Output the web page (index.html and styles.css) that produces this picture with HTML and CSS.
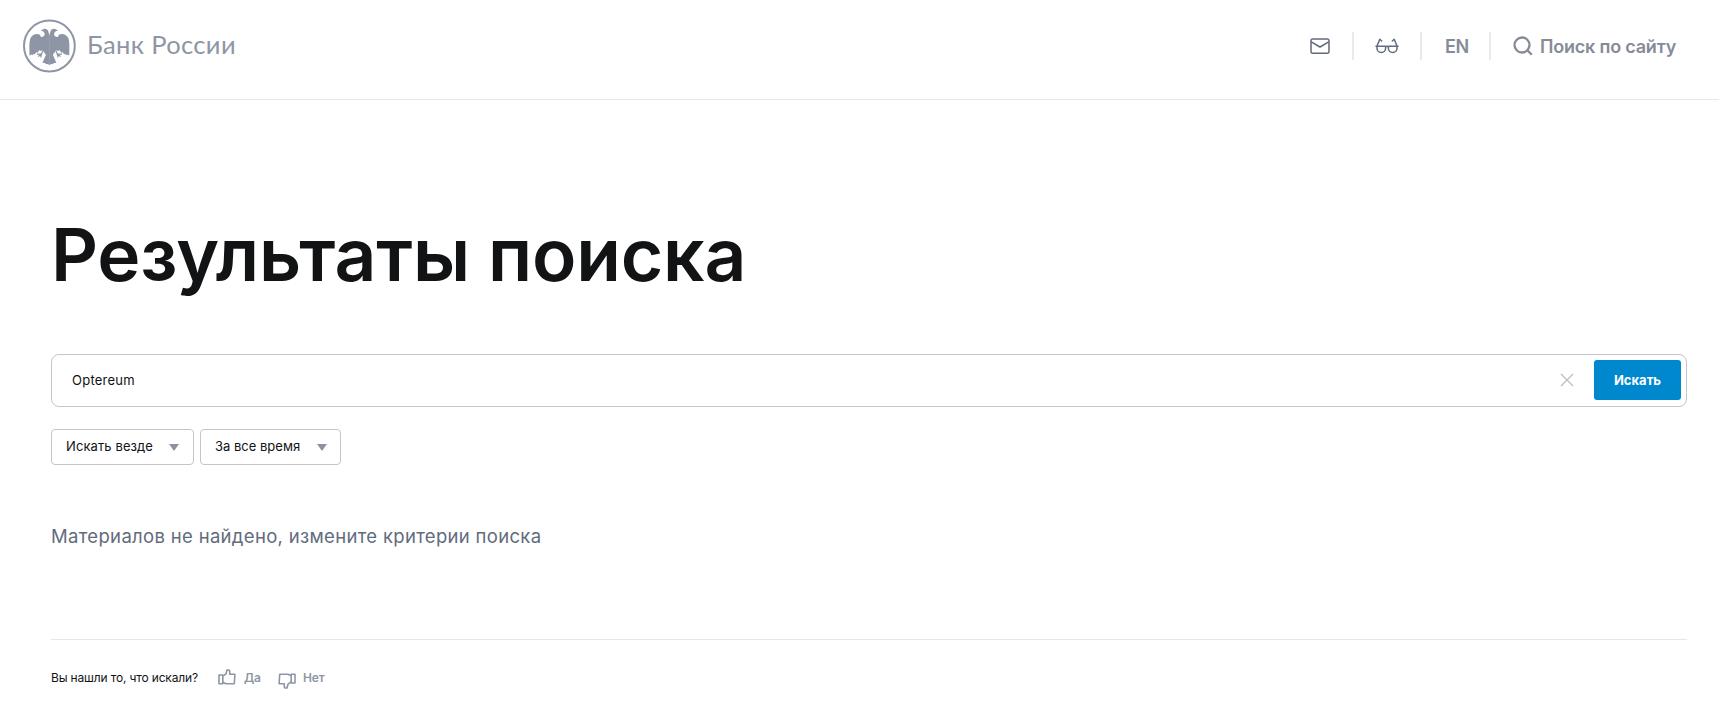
FILE: index.html
```html
<!DOCTYPE html>
<html lang="ru">
<head>
  <meta charset="UTF-8" />
  <title>Результаты поиска | Банк России</title>
  <meta name="viewport" content="width=device-width, initial-scale=1" />
  <link rel="stylesheet" href="styles.css">
</head>
<body>

  <header class="header">
    <a class="logo" href="#">
      <svg class="logo-emblem" viewBox="0 0 54 54" width="54" height="54">
        <circle cx="27.4" cy="27" r="25.400" fill="none" stroke="#8e96a5" stroke-width="2" />
        <g id="wing">
          <path fill="#8e96a5" d="M27.600 16.500C26.400 14 26.700 10.500 23.900 10Q21.900 9.300 20.700 10.500L18.700 11.500L20.900 12.300C23 13.500 23.400 16.600 21.200 17.600C19.200 18.500 17.900 17.600 18.300 16C15.400 14 10.500 15 8.500 19C6.800 23.500 7.600 30 7.500 36.800L9.400 35.600L10.100 36.200L11.600 34.900L12.700 35.300L14.200 33.300L15.600 33.700L17.100 31.200L19.100 32L20.700 31C21.400 33 23.400 34.500 23.900 36L20.400 43.700L22.700 44L24.400 45.300L25.900 45L27.600 46.300Z" />
          <path fill="none" stroke="#8e96a5" stroke-width="1.200" d="M20.900 31.500L19.600 35L14.900 35.200M19.600 35L16.200 37.500M19.600 35L18.700 38.300" />
        </g>
        <use href="#wing" transform="matrix(-1 0 0 1 54.800 0)" />
      </svg>
      <span class="logo-text">Банк России</span>
    </a>

    <nav class="tools">
      <a class="tool tool-mail" href="#">
        <svg viewBox="0 0 20 16" width="20" height="16" fill="none" stroke="#626b7c" stroke-width="1.500" stroke-linejoin="round">
          <rect x="1" y="0.900" width="18" height="14.400" rx="1.800" />
          <path d="M1.300 3.800L10 9L18.700 3.800" />
        </svg>
      </a>
      <a class="tool tool-glasses" href="#">
        <svg viewBox="0 0 24 16" width="24" height="16" fill="none" stroke="#626b7c" stroke-width="1.500" stroke-linecap="round" stroke-linejoin="round">
          <path d="M1 8.300H10.600V10.200A4.200 4.200 0 0 1 2 10.200V8.300M23 8.300H13.400V10.200A4.200 4.200 0 0 0 22 10.200V8.300M10.600 9C11.300 7.900 12.700 7.900 13.400 9M2 8L4.800 1.200L6.700 3M22 8L19.200 1.200L17.300 3" />
        </svg>
      </a>
      <a class="tool tool-lang" href="#">EN</a>
      <a class="tool tool-search" href="#">
        <svg viewBox="0 0 20 20" width="20" height="20" fill="none" stroke="#858b98" stroke-width="2.300">
          <circle cx="9" cy="9" r="7.500" />
          <path d="M14.300 14.300L18.800 18.800" />
        </svg>
        <span>Поиск по сайту</span>
      </a>
    </nav>
  </header>

  <main class="content">
    <h1 class="title">Результаты поиска</h1>

    <form class="search">
      <input class="search-input" type="text" value="Optereum" />
      <button class="search-clear" type="button" aria-label="Очистить">
        <svg viewBox="0 0 14 14" width="14" height="14" stroke="#bcc0c9" stroke-width="1.400">
          <path d="M1 1L13 13M13 1L1 13" />
        </svg>
      </button>
      <button class="search-submit" type="submit">Искать</button>
    </form>

    <div class="filters">
      <div class="filter filter-place">
        <span>Искать везде</span>
        <svg viewBox="0 0 10 7" width="10" height="7"><path fill="#8b93a3" d="M0 0H10L5 7Z" /></svg>
      </div>
      <div class="filter filter-time">
        <span>За все время</span>
        <svg viewBox="0 0 10 7" width="10" height="7"><path fill="#8b93a3" d="M0 0H10L5 7Z" /></svg>
      </div>
    </div>

    <p class="message">Материалов не найдено, измените критерии поиска</p>

    <div class="feedback">
      <span class="question">Вы нашли то, что искали?</span>
      <a class="vote vote-yes" href="#">
        <svg viewBox="0 0 18 16" width="18" height="16" fill="none" stroke="#8e96a5" stroke-width="1.600" stroke-linejoin="round">
          <path d="M1 6H4.800V14.800H1ZM4.800 7.200L8 4.800L9 1H11.200L11.700 2V5.300H16.900L16.300 14.800H8L4.800 13.300" />
        </svg>
        <span>Да</span>
      </a>
      <a class="vote vote-no" href="#">
        <svg viewBox="0 0 18 16" width="18" height="16" fill="none" stroke="#8e96a5" stroke-width="1.600" stroke-linejoin="round">
          <path d="M17 10H13.200V1.200H17ZM13.200 8.800L10 11.200L9 15H6.800L6.300 14V10.700H1.100L1.700 1.200H10L13.200 2.700" />
        </svg>
        <span>Нет</span>
      </a>
    </div>
  </main>

</body>
</html>
```
FILE: styles.css
```css
* {
  margin: 0;
  padding: 0;
  box-sizing: border-box;
}

body {
  font-family: Inter, "Liberation Sans", sans-serif;
  background: #fff;
  color: #111315;
}

a {
  color: inherit;
  text-decoration: none;
}

svg {
  display: block;
  flex: none;
}

.header {
  display: flex;
  justify-content: space-between;
  align-items: flex-start;
  height: 100px;
  padding: 19px 41px 0 22px;
  border-bottom: 1px solid #e6e7e9;
}

.logo {
  display: flex;
  align-items: center;
  gap: 11px;
}

.logo-text {
  padding-bottom: 4px;
  font-family: Lato, "Open Sans", sans-serif;
  font-size: 25.5px;
  line-height: 30px;
  letter-spacing: 0.35px;
  color: #8e96a5;
  white-space: nowrap;
}

.tools {
  display: flex;
  padding-top: 13px;
}

.tool {
  display: flex;
  align-items: center;
  height: 28px;
  font-size: 18px;
  font-weight: 600;
  color: #858b98;
  white-space: nowrap;
}

.tool + .tool {
  border-left: 2px solid #e9eaec;
}

.tool-mail {
  width: 42px;
}

.tool-glasses {
  width: 68px;
  padding-left: 21px;
}

.tool-lang {
  width: 69px;
  padding-left: 23px;
  letter-spacing: -0.4px;
}

.tool-search {
  width: 189px;
  padding-left: 22px;
  gap: 7px;
  letter-spacing: -0.2px;
}

.content {
  padding: 111px 32px 0 51px;
}

.title {
  font-size: 73px;
  line-height: 88px;
  font-weight: 600;
  letter-spacing: -0.2px;
  white-space: nowrap;
}

.search {
  display: flex;
  align-items: center;
  height: 53px;
  margin-top: 55px;
  padding: 0 5px 1px 20px;
  border: 1px solid #c3c5cd;
  border-radius: 8px;
}

.search-input {
  flex: 1;
  height: 40px;
  border: none;
  outline: none;
  background: none;
  font-family: inherit;
  font-size: 13px;
  letter-spacing: 0.25px;
  color: #111315;
}

.search-clear {
  width: 14px;
  margin-right: 20px;
  border: none;
  background: none;
}

.search-submit {
  width: 87px;
  height: 40px;
  border: none;
  border-radius: 3px;
  background: #0088cf;
  color: #fff;
  font-family: inherit;
  font-size: 13px;
  font-weight: 700;
}

.filters {
  display: flex;
  gap: 6px;
  margin-top: 22px;
}

.filter {
  display: flex;
  justify-content: space-between;
  align-items: center;
  height: 36px;
  padding: 0 14px;
  border: 1px solid #c3c5cd;
  border-radius: 4px;
  font-size: 13px;
  white-space: nowrap;
}

.filter span {
  padding-bottom: 2px;
}

.filter-place {
  width: 143px;
  letter-spacing: 0.1px;
}

.filter-time {
  width: 141px;
  padding-right: 13px;
}

.message {
  margin-top: 58px;
  font-size: 18.5px;
  line-height: 26px;
  letter-spacing: 0.32px;
  color: #626b7c;
}

.feedback {
  display: flex;
  align-items: center;
  margin-top: 90px;
  padding-top: 27px;
  border-top: 1px solid #e6e7e9;
  font-size: 12px;
  line-height: 20px;
}

.question {
  width: 167px;
  letter-spacing: -0.16px;
  white-space: nowrap;
}

.vote {
  display: flex;
  align-items: center;
  gap: 8px;
  font-weight: 600;
  letter-spacing: -0.2px;
  color: #8e96a5;
}

.vote-yes {
  width: 60px;
}

.vote-yes svg {
  margin-bottom: 2px;
}

.vote-no {
  gap: 7px;
}

.vote-no svg {
  margin-top: 6px;
}
```
